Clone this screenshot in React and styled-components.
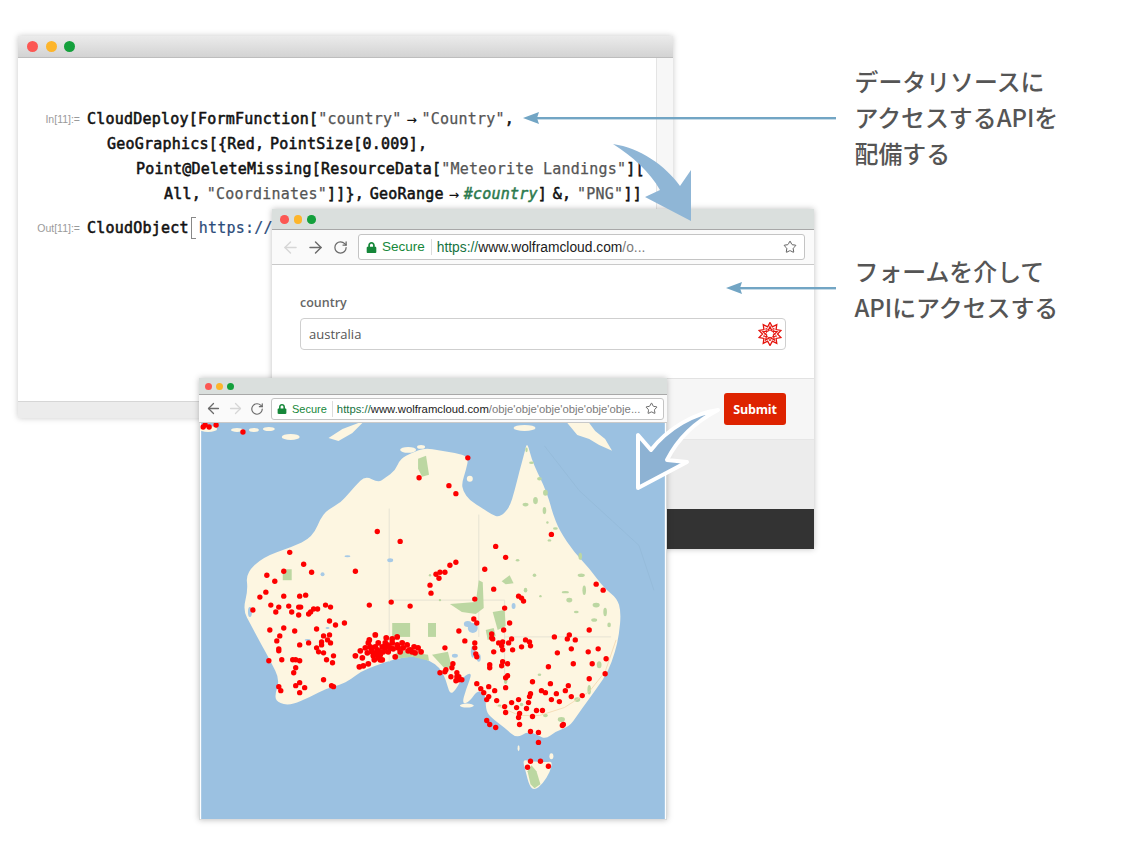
import React from 'react';
import styled, { createGlobalStyle } from 'styled-components';
import { ArrowLeft, ArrowRight, RotateCw, Star } from 'lucide-react';
import { FaLock } from 'react-icons/fa';

const GlobalStyle = createGlobalStyle`
  html, body {
    margin: 0;
    padding: 0;
    background: #fff;
    font-family: "Liberation Sans", Arial, sans-serif;
  }
`;

const MONO = '"DejaVu Sans Mono", "Liberation Mono", monospace';

const COAST = '312,537 322,513 335,505 342,500 355,485 365,475 378,482 385,477 395,470 400,458 412,452 425,447 440,450 455,452 469,456 466,470 462,482 463,490 470,500 483,508 492,514 500,517 510,507 515,490 520,470 525,452 527,443 529,446 532,458 538,472 544,484 550,500 553,512 560,530 575,552 590,568 605,588 618,598 622,612 620,635 616,652 609,672 598,688 587,703 578,716 570,727 556,732 546,740 538,735 528,732 517,739 506,729 490,717 486,710 486,695 478,690 470,702 462,705 466,690 473,672 463,677 456,690 450,695 446,680 440,668 430,661 415,656 395,659 375,666 360,672 350,680 340,685 325,689 310,697 290,706 276,703 274,695 279,680 270,662 258,640 250,625 242,610 247,590 245,573 262,557 290,547';
const TASMANIA = '523,760 530,762 547,763 553,762 551,772 543,785 535,791 530,787 526,772';
const PNG_TAIL = '568,422 578,434 590,438 600,444 613,450 606,438 596,430 590,422';
const TIMOR = '328,437 342,428 358,422 362,422 352,432 338,440';

const ISLANDS = [
  [207, 428, 9, 3], [236, 429, 6, 2], [253, 429, 5, 2], [268, 428, 6, 2],
  [290, 436, 9, 3], [408, 449, 8, 3], [421, 446, 4, 2], [467, 706, 7, 2],
  [519, 749, 1, 3], [552, 757, 2, 3], [470, 478, 3, 3], [525, 427, 11, 3],
];

const GREEN_PATCHES = [
  '282,569 291,569 291,580 282,580',
  '392,623 410,623 410,637 392,637',
  '428,623 436,623 436,637 428,637',
  '395,654 402,651 428,655 429,661 412,657 396,659',
  '450,604 476,602 479,580 483,582 484,608 476,614 462,612',
  '493,612 505,610 506,626 498,630',
  '502,581 510,575 514,583 506,584',
  '418,458 426,455 429,474 422,476 418,468',
  '432,655 448,652 452,668 444,668',
  '486,630 494,628 496,636 488,640',
];

const GREEN_FLECKS = [
  [527, 449, 2, 4], [532, 462, 4, 2], [540, 478, 4, 3], [546, 492, 4, 5], [526, 504, 5, 3],
  [545, 510, 3, 6], [556, 528, 4, 2], [548, 522, 2, 2], [581, 556, 3, 6], [582, 575, 6, 3],
  [566, 592, 6, 2], [585, 590, 3, 8], [597, 605, 6, 4], [606, 612, 3, 7], [595, 620, 5, 3],
  [610, 625, 3, 4], [570, 600, 5, 4], [577, 612, 4, 2], [600, 665, 4, 6], [590, 690, 3, 8],
  [578, 700, 5, 4], [562, 720, 6, 4], [546, 716, 4, 3], [500, 706, 3, 2], [522, 705, 3, 3],
  [550, 540, 3, 2], [535, 575, 3, 3], [526, 590, 3, 4], [541, 596, 2, 2], [540, 675, 3, 2],
  [518, 560, 3, 2], [430, 575, 2, 2], [440, 600, 2, 2], [506, 680, 3, 7], [536, 500, 4, 6],
];

const LAKES = [
  [468, 624, 4, 3], [473, 628, 5, 5], [473, 652, 2, 6], [479, 658, 2, 4], [327, 628, 2, 1],
  [307, 640, 3, 1], [322, 574, 2, 2], [390, 560, 3, 2], [514, 606, 2, 3], [455, 656, 3, 2],
  [347, 556, 3, 1], [249, 612, 2, 5],
];

const CLUSTER = [
  [375, 635], [386, 638], [392, 639], [397, 637], [369, 640], [368, 643], [370, 647], [365, 648],
  [360, 651], [355, 656], [362, 658], [367, 653], [372, 652], [359, 667], [363, 666], [368, 664],
  [374, 660], [382, 660], [380, 655], [377, 650], [382, 647], [387, 645], [392, 643], [397, 645],
  [402, 643], [407, 645], [410, 650], [414, 647], [418, 648], [421, 652], [415, 653], [412, 652],
  [400, 652], [395, 657], [388, 652], [383, 652], [385, 648], [380, 652], [390, 648], [393, 649],
  [403, 648], [375, 647], [380, 660], [378, 643], [385, 643], [398, 648], [376, 654], [408, 651],
  [373, 656], [378, 658], [371, 649],
];

const DOTS = [
  [202, 426], [208, 426], [204, 424], [215, 424], [242, 431], [468, 457], [419, 477], [449, 485], [456, 493],
  [377, 531], [400, 541], [289, 552], [303, 564], [283, 571], [311, 572], [266, 575], [355, 571], [274, 581],
  [265, 592], [259, 597], [283, 596], [299, 596], [305, 595], [270, 605], [278, 607], [288, 606], [298, 607],
  [300, 607], [252, 610], [275, 612], [291, 612], [298, 615], [310, 612], [308, 614], [313, 609], [317, 609],
  [325, 605], [330, 607], [369, 605], [391, 602], [410, 606], [430, 585], [431, 593], [329, 621], [335, 625],
  [344, 623], [269, 630], [283, 628], [294, 631], [316, 629], [279, 636], [323, 636], [329, 635], [276, 641],
  [327, 640], [330, 643], [321, 642], [321, 645], [299, 645], [308, 643], [278, 649], [278, 651], [316, 648],
  [318, 652], [323, 653], [333, 656], [268, 661], [281, 660], [292, 660], [295, 660], [299, 661], [326, 660],
  [332, 663], [295, 668], [293, 673], [323, 680], [299, 683], [295, 686], [304, 688], [278, 687], [280, 691],
  [299, 693], [331, 686], [333, 687],
  [552, 534], [496, 546], [506, 557], [456, 562], [450, 565], [445, 572], [440, 572], [436, 574], [439, 578],
  [485, 569], [597, 584], [604, 590], [494, 589], [519, 596], [522, 598], [524, 601], [475, 599], [505, 608],
  [474, 619], [477, 623], [510, 623], [459, 631], [504, 630], [590, 630], [492, 634], [492, 638], [493, 639],
  [465, 641], [475, 643], [475, 648], [445, 648], [499, 643], [503, 642], [502, 646], [503, 650], [509, 643],
  [512, 639], [526, 640], [530, 642], [531, 646], [522, 647], [513, 650], [494, 652], [555, 637], [570, 635],
  [568, 639], [576, 640], [572, 649], [558, 653], [599, 649], [589, 652], [607, 659], [593, 664], [574, 664],
  [549, 667], [606, 674], [590, 679], [476, 654], [477, 657], [503, 662], [508, 664], [502, 666], [490, 665],
  [490, 668], [508, 676], [506, 678], [533, 682], [551, 684], [569, 686], [566, 691], [542, 691], [546, 693],
  [557, 694], [572, 697], [583, 696], [506, 688], [477, 684], [481, 689], [484, 693], [489, 687], [495, 691],
  [489, 697], [487, 700], [497, 701], [531, 694], [530, 697], [529, 703], [512, 703], [519, 700], [552, 700],
  [560, 702], [505, 707], [517, 708], [527, 709], [537, 711], [543, 711], [506, 713], [520, 714], [519, 718],
  [533, 717], [487, 721], [490, 725], [496, 728], [520, 725], [531, 732], [539, 733], [564, 725], [563, 726],
  [453, 664], [452, 668], [446, 670], [445, 672], [440, 673], [451, 677], [457, 673], [457, 677], [459, 677],
  [456, 681], [459, 680], [462, 680], [539, 743], [531, 762], [541, 762], [549, 767], [528, 768],
];

// rounds the hand-traced outlines so the coast doesn't look like a polygon
const smoothPath = (outline) => {
  const pts = outline.split(' ').map((p) => p.split(',').map(Number));
  const mid = (a, b) => `${(a[0] + b[0]) / 2},${(a[1] + b[1]) / 2}`;
  let d = `M${mid(pts[pts.length - 1], pts[0])}`;
  pts.forEach((p, i) => {
    d += ` Q${p[0]},${p[1]} ${mid(p, pts[(i + 1) % pts.length])}`;
  });
  return `${d} Z`;
};

const starPoints = (cx, cy, outer, inner, spikes) => {
  const points = [];
  for (let i = 0; i < spikes * 2; i += 1) {
    const radius = i % 2 === 0 ? outer : inner;
    const angle = (Math.PI * i) / spikes - Math.PI / 2;
    points.push(`${(cx + radius * Math.cos(angle)).toFixed(2)},${(cy + radius * Math.sin(angle)).toFixed(2)}`);
  }
  return points.join(' ');
};

const WolframIcon = () => (
  <svg width="24" height="24" viewBox="0 0 24 24" fill="none" stroke="#e5140d">
    <polygon points={starPoints(12, 12, 11.5, 7.5, 10)} strokeWidth="1.3" />
    <polygon points={starPoints(12, 12, 7.5, 3.5, 5)} strokeWidth="1.2" />
    <polygon points={starPoints(12, 12, 3.5, 7, 5)} strokeWidth="0.9" />
  </svg>
);

const AustraliaMap = () => (
  <MapSvg viewBox="200 422 466 398">
    <rect x="200" y="422" width="466" height="398" fill="#9bc1e1" />
    <polyline points="545,445 580,490 640,545 655,590" fill="none" stroke="#94b9d8" strokeWidth="0.8" />
    <g fill="#fdf6e1">
      <path d={smoothPath(COAST)} />
      <path d={smoothPath(TASMANIA)} />
      <polygon points={PNG_TAIL} />
      <polygon points={TIMOR} />
      {ISLANDS.map(([cx, cy, rx, ry]) => (
        <ellipse key={`${cx}-${cy}`} cx={cx} cy={cy} rx={rx} ry={ry} />
      ))}
    </g>
    <g fill="none" stroke="#e6e3d3" strokeWidth="1">
      <polyline points="389,508 389,662" />
      <polyline points="479,514 479,637" />
      <polyline points="389,600 505,600 505,682" />
      <polyline points="505,637 612,637" />
    </g>
    <g fill="#bcd7a2">
      {GREEN_PATCHES.map((points) => (
        <polygon key={points} points={points} />
      ))}
      <polygon points="532,766 537,772 541,785 535,789 531,785 528,772" />
      {GREEN_FLECKS.map(([cx, cy, rx, ry]) => (
        <ellipse key={`${cx}-${cy}`} cx={cx} cy={cy} rx={rx * 0.6} ry={ry * 0.6} />
      ))}
    </g>
    <g fill="#a7cae6">
      {LAKES.map(([cx, cy, rx, ry]) => (
        <ellipse key={`${cx}-${cy}`} cx={cx} cy={cy} rx={rx} ry={ry} />
      ))}
    </g>
    <polyline
      points="617,640 606,672 590,692 565,708 540,716 520,716 497,706"
      fill="none"
      stroke="#f3d6ae"
      strokeWidth="0.8"
    />
    <g fill="#fd0000">
      {CLUSTER.map(([cx, cy]) => (
        <circle key={`c${cx}-${cy}`} cx={cx} cy={cy} r="2.9" />
      ))}
      {DOTS.map(([cx, cy], i) => (
        <circle key={`d${i.toString()}`} cx={cx} cy={cy} r="2.7" />
      ))}
    </g>
  </MapSvg>
);

const Browser = ({ small, url, path }) => (
  <>
    <ChromeTitle $small={small}>
      <Light $small={small} $color="#fc5753" />
      <Light $small={small} $color="#fdb52b" />
      <Light $small={small} $color="#14a03c" />
    </ChromeTitle>
    <ChromeToolbar $small={small}>
      <NavIcon $small={small} $faded={!small}>
        <ArrowLeft size={small ? 17 : 19} strokeWidth={1.8} />
      </NavIcon>
      <NavIcon $small={small} $faded={small}>
        <ArrowRight size={small ? 17 : 19} strokeWidth={1.8} />
      </NavIcon>
      <NavIcon $small={small}>
        <RotateCw size={small ? 14 : 15} strokeWidth={2} />
      </NavIcon>
      <UrlBox $small={small}>
        <FaLock size={small ? 10 : 11} color="#16873a" />
        <SecureLabel $small={small}>Secure</SecureLabel>
        <UrlText $small={small}>
          <UrlScheme>https://</UrlScheme>
          {url}
          <UrlPath>{path}</UrlPath>
        </UrlText>
        <StarSlot>
          <Star size={small ? 13 : 14} strokeWidth={1.6} />
        </StarSlot>
      </UrlBox>
    </ChromeToolbar>
  </>
);

const App = () => (
  <Canvas>
    <GlobalStyle />

    <NotebookWindow>
      <NotebookTitle>
        <NotebookLight $color="#fc5753" />
        <NotebookLight $color="#fdb52b" />
        <NotebookLight $color="#14a03c" />
      </NotebookTitle>
      <NotebookBody>
        <Cells>
          <CodeRow>
            <CellLabel>In[11]:=</CellLabel>
            <Code>
              CloudDeploy[FormFunction[<Str>"country"</Str>
              <Rule>→</Rule>
              <Str>"Country"</Str>,
            </Code>
          </CodeRow>
          <CodeRow>
            <CellLabel />
            <Code $indent={20}>GeoGraphics[{'{'}Red, PointSize[0.009],</Code>
          </CodeRow>
          <CodeRow>
            <CellLabel />
            <Code $indent={49}>
              Point@DeleteMissing[ResourceData[<Str>"Meteorite Landings"</Str>][
            </Code>
          </CodeRow>
          <CodeRow>
            <CellLabel />
            <Code $indent={77}>
              All, <Str>"Coordinates"</Str>]]{'}'}, GeoRange<Rule>→</Rule>
              <Slot>#country</Slot>] &amp;, <Str>"PNG"</Str>]]
            </Code>
          </CodeRow>
          <OutRow>
            <CellLabel>Out[11]:=</CellLabel>
            <Code>
              CloudObject<TallBracket />
              <UrlCode>https://</UrlCode>
            </Code>
          </OutRow>
        </Cells>
        <NotebookScroll />
      </NotebookBody>
      <NotebookFooter />
    </NotebookWindow>

    <FormWindow>
      <Browser url="www.wolframcloud.com" path="/o..." />
      <FormBody>
        <FieldLabel>country</FieldLabel>
        <FieldBox>
          australia
          <WolframIcon />
        </FieldBox>
      </FormBody>
      <FormActions>
        <SubmitButton>Submit</SubmitButton>
      </FormActions>
      <FormBand />
      <FormDarkBar />
    </FormWindow>

    <MapWindow>
      <Browser small url="www.wolframcloud.com" path="/obje'obje'obje'obje'obje'obje..." />
      <AustraliaMap />
    </MapWindow>

    <Overlay viewBox="0 0 1136 848">
      <g fill="#72a5c4">
        <rect x="534" y="117" width="302" height="2.4" />
        <polygon points="523,118 539,112 537,118 539,124" />
        <rect x="738" y="287" width="98" height="2.4" />
        <polygon points="726,288 742,282 740,288 742,294" />
      </g>
      <path
        d="M613,144 C640,148 665,165 680,186 L691,170 L691,221 L645,197 L660,190 C650,172 632,156 613,144 Z"
        fill="#8fb6d6"
      />
      <path
        d="M718,410 C695,413 668,428 651,450 L638,435 L638,488 L687,462 L667,460 C677,440 695,422 718,410 Z"
        fill="#8db2d3"
        stroke="#fff"
        strokeWidth="4"
        strokeLinejoin="round"
      />
    </Overlay>

    <Note $top={63}>
      データリソースに
      <br />
      アクセスするAPIを
      <br />
      配備する
    </Note>
    <Note $top={253}>
      フォームを介して
      <br />
      APIにアクセスする
    </Note>
  </Canvas>
);

const Canvas = styled.div`
  position: relative;
  width: 1136px;
  height: 848px;
  overflow: hidden;
  background: #fff;
`;

const NotebookWindow = styled.div`
  position: absolute;
  left: 18px;
  top: 36px;
  width: 655px;
  height: 382px;
  display: flex;
  flex-direction: column;
  background: #fff;
  box-shadow: 0 0 6px rgba(0, 0, 0, 0.22);
`;

const NotebookTitle = styled.div`
  height: 21px;
  flex: none;
  display: flex;
  align-items: center;
  gap: 7.5px;
  padding-left: 9px;
  background: linear-gradient(#ebebeb, #d3d3d3);
  border-bottom: 1px solid #bdbdbd;
`;

const NotebookLight = styled.span`
  width: 11px;
  height: 11px;
  border-radius: 50%;
  background: ${props => props.$color};
`;

const NotebookBody = styled.div`
  flex: 1;
  display: flex;
`;

const Cells = styled.div`
  flex: 1;
  padding-top: 48px;
`;

const NotebookScroll = styled.div`
  width: 16px;
  background: #f7f7f7;
  border-left: 1px solid #e4e4e4;
`;

const NotebookFooter = styled.div`
  height: 16px;
  flex: none;
  background: #ececec;
  border-top: 1px solid #d6d6d6;
`;

const CodeRow = styled.div`
  height: 25px;
  display: flex;
  align-items: center;
`;

const OutRow = styled(CodeRow)`
  margin-top: 9px;
`;

const CellLabel = styled.span`
  width: 62px;
  margin-right: 7px;
  flex: none;
  text-align: right;
  font-size: 10.5px;
  color: #9a9a9a;
`;

const Code = styled.div`
  margin-left: ${props => props.$indent || 0}px;
  display: flex;
  align-items: center;
  white-space: pre;
  font-family: ${MONO};
  font-size: 15px;
  font-weight: 400;
  letter-spacing: 0.22px;
  word-spacing: -3.5px;
  color: #111;
  -webkit-text-stroke: 0.55px #111;
`;

const Str = styled.span`
  color: #555;
  word-spacing: 0;
  -webkit-text-stroke: 0.25px #555;
`;

const Rule = styled.span`
  display: inline-block;
  width: 20px;
  text-align: center;
  font-size: 17px;
  line-height: 20px;
  letter-spacing: 0;
  -webkit-text-stroke: 0;
`;

const Slot = styled.span`
  font-style: italic;
  color: #2c7a4e;
  -webkit-text-stroke: 0.5px #2c7a4e;
`;

const UrlCode = styled.span`
  color: #2b4c7a;
  -webkit-text-stroke: 0.2px #2b4c7a;
`;

const TallBracket = styled.span`
  display: inline-block;
  width: 4px;
  height: 20px;
  margin: 0 3px 0 2px;
  border: 1px solid #888;
  border-right: 0;
`;

const FormWindow = styled.div`
  position: absolute;
  left: 272px;
  top: 209px;
  width: 542px;
  height: 340px;
  display: flex;
  flex-direction: column;
  background: #fff;
  box-shadow: 0 0 6px rgba(0, 0, 0, 0.25);
`;

const MapWindow = styled.div`
  position: absolute;
  left: 199px;
  top: 378px;
  width: 468px;
  height: 442px;
  display: flex;
  flex-direction: column;
  background: #fff;
  box-shadow: 0 0 6px rgba(0, 0, 0, 0.25);
`;

const ChromeTitle = styled.div`
  height: ${props => (props.$small ? 16 : 20)}px;
  flex: none;
  display: flex;
  align-items: center;
  box-sizing: content-box;
  gap: ${props => (props.$small ? 4 : 5)}px;
  padding-left: ${props => (props.$small ? 6 : 8)}px;
  background: #dadfdd;
  border-bottom: 1px solid #a8a8a8;
`;

const Light = styled.span`
  width: ${props => (props.$small ? 7 : 8.5)}px;
  height: ${props => (props.$small ? 7 : 8.5)}px;
  margin-top: 1px;
  border-radius: 50%;
  background: ${props => props.$color};
`;

const ChromeToolbar = styled.div`
  height: ${props => (props.$small ? 27 : 34)}px;
  flex: none;
  display: flex;
  align-items: center;
  padding: 0 ${props => (props.$small ? 3 : 9)}px 0 ${props => (props.$small ? 3 : 6)}px;
  background: #fafafa;
  border-bottom: 1px solid #c9c9c9;
`;

const NavIcon = styled.span`
  width: ${props => (props.$small ? 22 : 25)}px;
  flex: none;
  display: flex;
  justify-content: center;
  color: ${props => (props.$faded ? '#d6d6d6' : '#6a6a6a')};
`;

const UrlBox = styled.div`
  flex: 1;
  min-width: 0;
  height: ${props => (props.$small ? 22 : 26)}px;
  margin-left: ${props => (props.$small ? 3 : 5)}px;
  display: flex;
  align-items: center;
  padding: 0 ${props => (props.$small ? 5 : 7)}px;
  background: #fff;
  border: 1px solid #c4c4c4;
  border-radius: 3px;
  box-sizing: border-box;
`;

const SecureLabel = styled.span`
  margin-left: 5px;
  padding-right: ${props => (props.$small ? 5 : 6)}px;
  border-right: 1px solid #dcdcdc;
  font-size: ${props => (props.$small ? 11 : 13.5)}px;
  line-height: 16px;
  color: #16873a;
`;

const UrlText = styled.span`
  margin-left: ${props => (props.$small ? 4 : 5)}px;
  font-size: ${props => (props.$small ? 11.3 : 13.8)}px;
  color: #1b1b1b;
  white-space: nowrap;
`;

const UrlScheme = styled.span`
  color: #16733f;
`;

const UrlPath = styled.span`
  color: #7b7b7b;
`;

const StarSlot = styled.span`
  margin-left: auto;
  display: flex;
  color: #555;
`;

const FormBody = styled.div`
  height: 113px;
  flex: none;
  box-sizing: border-box;
  padding: 29px 28px 0;
`;

const FieldLabel = styled.div`
  font-family: "Open Sans", sans-serif;
  font-size: 12.5px;
  font-weight: 600;
  line-height: 18px;
  margin-bottom: 6px;
  color: #666;
`;

const FieldBox = styled.div`
  height: 32px;
  display: flex;
  align-items: center;
  justify-content: space-between;
  box-sizing: border-box;
  padding: 0 3px 0 8px;
  border: 1px solid #cfcfcf;
  border-radius: 4px;
  font-family: "Open Sans", sans-serif;
  font-size: 13px;
  color: #555;
`;

const FormActions = styled.div`
  height: 62px;
  flex: none;
  display: flex;
  justify-content: flex-end;
  align-items: flex-start;
  box-sizing: border-box;
  padding: 14px 28px 0 0;
  background: #f6f6f6;
  border-top: 1px solid #e2e2e2;
  border-bottom: 1px solid #e6e6e6;
`;

const SubmitButton = styled.button`
  width: 62px;
  height: 32px;
  padding: 0;
  border: 0;
  border-radius: 3px;
  background: #de2300;
  font-family: "Open Sans", sans-serif;
  font-size: 12.5px;
  font-weight: 700;
  letter-spacing: -0.2px;
  color: #fff;
`;

const FormBand = styled.div`
  flex: 1;
  background: #ececec;
`;

const FormDarkBar = styled.div`
  height: 40px;
  flex: none;
  background: #333;
`;

const MapSvg = styled.svg`
  display: block;
  box-sizing: border-box;
  width: 468px;
  height: 398px;
  border-left: 1px solid #d8dcdc;
  border-right: 1px solid #d8dcdc;
  border-bottom: 1px solid #dcdcdc;
`;

const Overlay = styled.svg`
  position: absolute;
  left: 0;
  top: 0;
  width: 1136px;
  height: 848px;
  pointer-events: none;
`;

const Note = styled.div`
  position: absolute;
  left: 854.5px;
  top: ${props => props.$top}px;
  font-family: "Noto Sans CJK JP", sans-serif;
  font-size: 23.9px;
  font-weight: 500;
  line-height: 36px;
  color: #555;
  white-space: nowrap;
`;

export default App;
